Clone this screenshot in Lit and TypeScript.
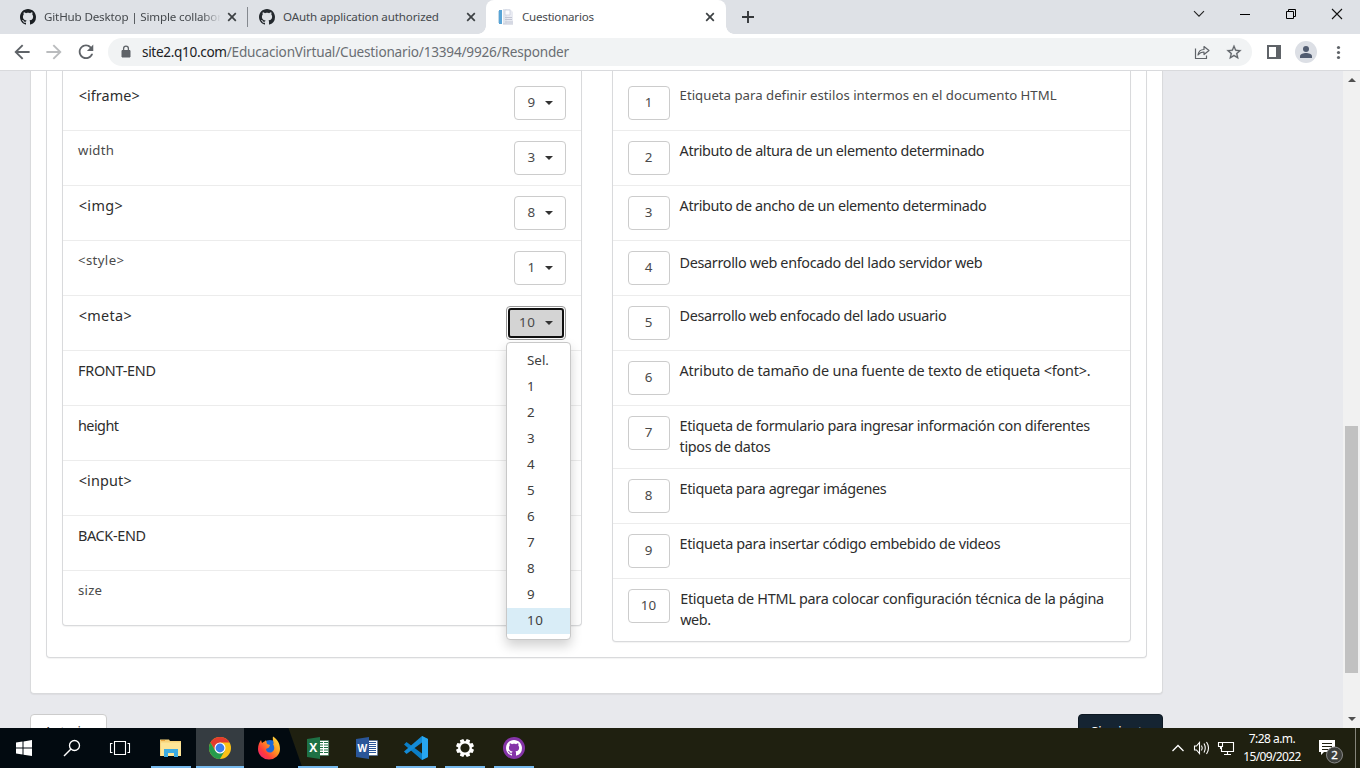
import { LitElement, html, css, svg, nothing } from "lit";
import { customElement, property } from "lit/decorators.js";
import { classMap } from "lit/directives/class-map.js";

const MARK =
  "M8 0C3.58 0 0 3.58 0 8c0 3.54 2.29 6.53 5.47 7.59.4.07.55-.17.55-.38 0-.19-.01-.82-.01-1.49-2.01.37-2.53-.49-2.69-.94-.09-.23-.48-.94-.82-1.13-.28-.15-.68-.52-.01-.53.63-.01 1.08.58 1.23.82.72 1.21 1.87.87 2.33.66.07-.52.28-.87.51-1.07-1.78-.2-3.64-.89-3.64-3.95 0-.87.31-1.59.82-2.15-.08-.2-.36-1.02.08-2.12 0 0 .67-.21 2.2.82.64-.18 1.32-.27 2-.27.68 0 1.36.09 2 .27 1.53-1.04 2.2-.82 2.2-.82.44 1.1.16 1.92.08 2.12.51.56.82 1.27.82 2.15 0 3.07-1.87 3.75-3.65 3.95.29.25.54.73.54 1.48 0 1.07-.01 1.93-.01 2.2 0 .21.15.46.55.38A8.013 8.013 0 0016 8c0-4.42-3.58-8-8-8z";

/** One line of text whose tracking is adjusted so it spans a given width. */
@customElement("fit-text")
class FitText extends LitElement {
  @property() text = "";
  @property({ type: Number }) width = 0;
  static styles = css`
    :host { display: block; white-space: pre; }
    .t { display: inline-block; }
  `;
  firstUpdated() {
    const el = this.renderRoot.querySelector<HTMLElement>(".t")!;
    const natural = el.getBoundingClientRect().width;
    const n = this.text.length;
    if (this.width && n > 1) el.style.letterSpacing = `${(this.width - natural) / (n - 1)}px`;
  }
  render() {
    return html`<span class="t">${this.text}</span>`;
  }
}

const cross = svg`<path d="M-3.8-3.8 3.8 3.8M3.8-3.8-3.8 3.8" stroke="#3c4043" stroke-width="1.7"/>`;

@customElement("browser-chrome")
class BrowserChrome extends LitElement {
  static styles = css`
    :host { display: block; font-family: "Noto Sans", "Open Sans", sans-serif; color: #45494d; }
    svg { display: block; flex: none; overflow: visible; }
    .strip { display: flex; height: 34px; background: #dee1e6; font-size: 11.6px; line-height: 34px; }
    .tab { display: flex; align-items: center; box-sizing: border-box; height: 34px; }
    .tab fit-text { flex: 1; min-width: 0; margin-left: 8px; height: 34px; }
    .t1 { width: 247px; padding: 0 9px 0 20px; }
    .t1 fit-text { margin-right: 4px; -webkit-mask-image: linear-gradient(to right, #000 158px, transparent 177px); }
    .t2 { width: 238px; padding: 0 9px 0 11px; }
    .sep { width: 1px; height: 20px; margin-top: 7px; background: #85898f; }
    .active { width: 240px; background: #fff; border-radius: 8px 8px 0 0; padding: 0 10px 0 12px; position: relative; }
    .active::before, .active::after { content: ""; position: absolute; bottom: 0; width: 8px; height: 8px; }
    .active::before { left: -8px; background: radial-gradient(circle at 0 0, transparent 7.5px, #fff 8px); }
    .active::after { right: -8px; background: radial-gradient(circle at 100% 0, transparent 7.5px, #fff 8px); }
    .plus { margin: 10px 0 0 15px; }
    .win { margin-left: auto; display: flex; gap: 26px; padding: 4px 13px 0 0; }
    .bar { display: flex; align-items: center; height: 36px; padding: 0 12px; box-sizing: border-box; background: #fff; border-bottom: 0; }
    .nav { display: flex; gap: 12px; margin-right: 12px; }
    .omni { display: flex; align-items: center; flex: 1; height: 28px; border-radius: 14px; background: #f1f3f4; padding: 0 8px 0 10px; font-size: 13.6px; line-height: 28px; color: #6a6e73; margin-right: 12px; }
    .url { display: flex; margin-left: 8px; flex: 1; }
    .host { color: #202124; }
    .acts { display: flex; gap: 12px; }
    .edge { height: 1px; background: #d9dadd; }
  `;
  private close() {
    return html`<svg width="12" height="12" viewBox="-6 -6 12 12">${cross}</svg>`;
  }
  render() {
    return html`
      <div class="strip">
        <div class="tab t1">
          <svg width="16" height="16" viewBox="0 0 16 16"><path fill="#1b1f23" d=${MARK} /></svg>
          <fit-text text="GitHub Desktop | Simple collabor" .width=${178}></fit-text>${this.close()}
        </div>
        <div class="sep"></div>
        <div class="tab t2">
          <svg width="16" height="16" viewBox="0 0 16 16"><path fill="#24292e" d=${MARK} /></svg>
          <fit-text text="OAuth application authorized" .width=${156}></fit-text>${this.close()}
        </div>
        <div class="tab active">
          <svg width="16" height="16" viewBox="0 0 16 16">
            <path d="M1 1h3v14H1z" fill="#58a4d6" /><path d="M0 2h1v12H0z" fill="#c3d9e8" />
            <path d="M5 0h7l3 3v12H5z" fill="#e9ebf2" /><path d="M5 0h4v15H5z" fill="#dfe4ec" />
            <path d="M7 1h5v5H7z" fill="#fafbfd" stroke="#ccd0df" stroke-width=".8" />
            <path d="M7 8.5h7M7 10.5h7M7 13h8M5 15h10" stroke="#c2c6d4" />
          </svg>
          <fit-text text="Cuestionarios" .width=${72}></fit-text>${this.close()}
        </div>
        <svg class="plus" width="14" height="14" viewBox="0 0 14 14"><path d="M7 1v12M1 7h12" stroke="#35383b" stroke-width="1.9" /></svg>
        <div class="win">
          <svg width="20" height="20" viewBox="-10 -10 20 20"><path d="M-5-2.8 0 2.2 5-2.8" fill="none" stroke="#222" stroke-width="1.1" /></svg>
          <svg width="20" height="20" viewBox="-10 -10 20 20"><path d="M-5 .5H5" stroke="#000" /></svg>
          <svg width="20" height="20" viewBox="-10 -10 20 20"><path d="M-4.5-2.5h7v7h-7zM-2.5-2.5v-2h7v7h-2" fill="none" stroke="#000" /></svg>
          <svg width="20" height="20" viewBox="-10 -10 20 20"><path d="M-5-5 5 5M5-5-5 5" stroke="#111" stroke-width="1.1" /></svg>
        </div>
      </div>
      <div class="bar">
        <div class="nav">
          <svg width="20" height="20" viewBox="1.5 1.5 21 21"><path fill="#5f6368" d="M20 11H7.83l5.59-5.59L12 4l-8 8 8 8 1.41-1.41L7.83 13H20z" /></svg>
          <svg width="20" height="20" viewBox="1.5 1.5 21 21"><path fill="#babcbe" d="M4 11h12.17l-5.59-5.59L12 4l8 8-8 8-1.41-1.41L16.17 13H4z" /></svg>
          <svg width="20" height="20" viewBox="1 1.2 22 22"><path fill="#5f6368" d="M17.65 6.35C16.2 4.9 14.21 4 12 4c-4.42 0-7.99 3.58-7.99 8s3.57 8 7.99 8c3.73 0 6.84-2.55 7.73-6h-2.08c-.82 2.33-3.04 4-5.65 4-3.31 0-6-2.69-6-6s2.69-6 6-6c1.66 0 3.14.69 4.22 1.78L13 11h7V4l-2.35 2.35z" /></svg>
        </div>
        <div class="omni">
          <svg width="16" height="16" viewBox="0 0 16 16"><path d="M4 6.5h8v6.5H4z" fill="#5f6368" stroke="#5f6368" stroke-linejoin="round" /><path d="M5.6 6.5V4.5a2.4 2.4 0 0 1 4.8 0v2" fill="none" stroke="#5f6368" stroke-width="1.3" /></svg>
          <div class="url">
            <fit-text class="host" text="site2.q10.com" .width=${85}></fit-text>
            <fit-text text="/EducacionVirtual/Cuestionario/13394/9926/Responder" .width=${342.5}></fit-text>
          </div>
          <div class="acts">
            <svg width="20" height="20" viewBox="-10 -10 20 20"><path d="M-6.5-3.5V6.500H4.500V3.500M-4 3C-3.500-1 -1-2.500 2-2.500V-5.500L7-1.500 2 2.500V0C-1 0-2.500 1-4 3z" fill="none" stroke="#5f6368" stroke-width="1.2" stroke-linejoin="round" /></svg>
            <svg width="20" height="20" viewBox="-1.5 -1.8 27 27"><path fill="#5f6368" stroke="#5f6368" stroke-width=".3" d="M22 9.24l-7.19-.62L12 2 9.19 8.63 2 9.24l5.46 4.73L5.82 21 12 17.27 18.18 21l-1.63-7.03L22 9.24zM12 15.4l-3.76 2.27 1-4.28-3.32-2.88 4.38-.38L12 6.1l1.71 4.04 4.38.38-3.32 2.88 1 4.28L12 15.4z" /></svg>
          </div>
        </div>
        <div class="acts">
          <svg width="20" height="20" viewBox="-10 -10 20 20"><path d="M-7-7H7V7H-7zM-5-5V5H2V-5z" fill="#5f6368" fill-rule="evenodd" /></svg>
          <svg width="20" height="20" viewBox="-10 -10 20 20"><circle r="11" fill="#dcdfe5" /><circle cy="-3" r="3" fill="#515c70" /><path d="M-6 6V4.500C-6 2-2.500 1.100 0 1.100S6 2 6 4.500V6z" fill="#515c70" /></svg>
          <svg width="20" height="20" viewBox="-10 -10 20 20"><g fill="#5f6368"><circle cx=".5" cy="-4.500" r="1.600" /><circle cx=".5" cy=".5" r="1.600" /><circle cx=".5" cy="5.500" r="1.600" /></g></svg>
        </div>
      </div>
      <div class="edge"></div>
    `;
  }
}

type Term = { text: string; w: number; light?: boolean; value?: number };
const TERMS: Term[] = [
  { text: "<iframe>", w: 61, value: 9 },
  { text: "width", w: 36, light: true, value: 3 },
  { text: "<img>", w: 44, value: 8 },
  { text: "<style>", w: 46, light: true, value: 1 },
  { text: "<meta>", w: 53, value: 10 },
  { text: "FRONT-END", w: 78 },
  { text: "height", w: 41 },
  { text: "<input>", w: 53 },
  { text: "BACK-END", w: 68 },
  { text: "size", w: 24, light: true },
];
type Def = { lines: [string, number][]; light?: boolean; low?: boolean };
const DEFS: Def[] = [
  { lines: [["Etiqueta para definir estilos intermos en el documento HTML", 377]], light: true },
  { lines: [["Atributo de altura de un elemento determinado", 305]] },
  { lines: [["Atributo de ancho de un elemento determinado", 307]] },
  { lines: [["Desarrollo web enfocado del lado servidor web", 303]], low: true },
  { lines: [["Desarrollo web enfocado del lado usuario", 267]] },
  { lines: [["Atributo de tamaño de una fuente de texto de etiqueta <font>.", 411]] },
  { lines: [["Etiqueta de formulario para ingresar información con diferentes", 410.5], ["tipos de datos", 91]] },
  { lines: [["Etiqueta para agregar imágenes", 207]] },
  { lines: [["Etiqueta para insertar código embebido de videos", 321]] },
  { lines: [["Etiqueta de HTML para colocar configuración técnica de la página", 424], ["web.", 31]] },
];
const OPTIONS = ["Sel.", "1", "2", "3", "4", "5", "6", "7", "8", "9", "10"];

@customElement("quiz-page")
class QuizPage extends LitElement {
  static styles = css`
    :host { display: flex; flex: 1; min-height: 0; overflow: hidden; background: #e8e9ed; font-family: "Noto Sans", sans-serif; color: #333; font-size: 14.4px; line-height: 21px; }
    .view { flex: 1; padding: 0 180px 0 30px; }
    .card, .inner, .panel { border: 1px solid #d9dadc; border-top: 0; border-radius: 0 0 4px 4px; box-sizing: border-box; background: #fff; box-shadow: 0 1px 1px rgba(0, 0, 0, 0.05); }
    .card { padding: 0 15px 35px; height: 623px; }
    .inner { height: 587px; padding: 0 15px; display: flex; justify-content: space-between; align-items: flex-start; }
    .panel { width: 520px; padding-top: 5px; }
    .panel.right { width: 519px; }
    .row { display: flex; box-sizing: border-box; min-height: 55px; padding: 10px 15px; border-bottom: 1px solid #ececec; }
    .row:last-child { border-bottom: 0; min-height: 54px; }
    .left .row { justify-content: space-between; }
    .text { color: #2d2d2d; position: relative; top: -1px; }
    .light { font-size: 13.2px; color: #4a4a4a; }
    .low { top: 1px; }
    .tag { margin-left: .7px; }
    .right .text { margin-left: 9.6px; }
    .right .row:last-child .text { margin-left: 10.2px; }
    .num { width: 42px; height: 34px; box-sizing: border-box; border: 1px solid #ccc; border-radius: 4px; text-align: center; font-size: 13.4px; line-height: 31px; padding-right: 1px; color: #4a4a4a; }
    .slot { position: relative; }
    .pick { display: flex; align-items: center; justify-content: space-between; width: 52px; height: 34px; box-sizing: border-box; border: 1px solid #ccc; border-radius: 4px; padding: 0 12px 0 12.5px; margin: 0; background: #fff; font: 13.4px/31px "Noto Sans", sans-serif; color: #4a4a4a; }
    .pick span { height: 32px; }
    .pick i { width: 0; height: 0; border: 4px solid transparent; border-top-color: #333; border-bottom: 0; }
    .open { width: 60px; border: 1px solid #999; padding: 1px; }
    .open .face { display: flex; align-items: center; justify-content: space-between; flex: 1; height: 30px; box-sizing: border-box; border: 2px solid #101010; border-radius: 3px; background: #d4d4d4; padding: 0 9px 0 9px; }
    .open span { line-height: 30px; letter-spacing: .6px; }
    .menu { position: absolute; z-index: 2; top: 36px; left: 0; width: 65px; box-sizing: border-box; padding: 5px 0; margin: 0; list-style: none; background: #fff; border: 1px solid #c8c8c8; border-radius: 4px; box-shadow: 0 6px 12px rgba(0, 0, 0, 0.18); }
    .menu li { height: 26px; line-height: 24px; padding-left: 20px; font-size: 13.4px; color: #404040; }
    .menu .on { background: #d9edf7; letter-spacing: .6px; }
    .foot { display: flex; justify-content: space-between; margin: 20px 0 0; width: 1133px; }
    .btn { box-sizing: border-box; height: 34px; border: 1px solid #ccc; border-radius: 4px; background: #fff; font-size: 13.2px; line-height: 32px; padding: 0 13px; }
    .prev { width: 77px; }
    .next { width: 85px; background: #152432; border-color: #0d1822; color: #fff; padding: 0 12px; }
    .scroll { width: 17px; background: #f1f1f1; display: flex; flex-direction: column; align-items: center; justify-content: space-between; box-sizing: border-box; padding: 7px 0; }
    .thumb { width: 13px; height: 247px; margin-top: 299px; background: #c1c1c1; }
    svg { display: block; }
  `;
  private select(t: Term) {
    if (t.value === undefined) return nothing;
    if (t.value !== 10) return html`<button class="pick"><span>${t.value}</span><i></i></button>`;
    return html`<div class="slot">
      <div class="pick open"><div class="face"><span>10</span><i></i></div></div>
      <ul class="menu">${OPTIONS.map((o) => html`<li class=${classMap({ on: o === "10" })}>${o}</li>`)}</ul>
    </div>`;
  }
  render() {
    return html`
      <div class="view">
        <div class="card"><div class="inner">
          <div class="panel left">
            ${TERMS.map((t) => html`<div class="row">
              <div class=${classMap({ text: true, light: !!t.light, tag: !t.light && t.text[0] === "<" })}><fit-text .text=${t.text} .width=${t.w}></fit-text></div>
              ${this.select(t)}
            </div>`)}
          </div>
          <div class="panel right">
            ${DEFS.map((d, i) => html`<div class="row">
              <div class="num">${i + 1}</div>
              <div class=${classMap({ text: true, light: !!d.light, low: !!d.low })}>
                ${d.lines.map(([s, w]) => html`<fit-text .text=${s} .width=${w}></fit-text>`)}
              </div>
            </div>`)}
          </div>
        </div></div>
        <div class="foot">
          <div class="btn prev"><fit-text text="Anterior" .width=${50}></fit-text></div>
          <div class="btn next"><fit-text text="Siguiente" .width=${59}></fit-text></div>
        </div>
      </div>
      <div class="scroll">
        <svg width="8" height="4" viewBox="0 0 8 4"><path d="M0 4 4 0l4 4z" fill="#505050" /></svg>
        <div class="thumb"></div>
        <svg width="8" height="4" viewBox="0 0 8 4"><path d="M0 0h8L4 4z" fill="#505050" /></svg>
      </div>
    `;
  }
}

const office = (dark: string, light: string, letter: string) => svg`
  <path d="M10.600-7.500V7.500H-1V-7.500z" fill="#fff" stroke=${light} stroke-width=".5"/>
  ${letter === "X"
    ? svg`<path d="M2-5.500h3M6-5.500h4M2-3h3M6-3h4M2-.5h3M6-.5h4M2 2h3M6 2h4M2 4.500h3M6 4.500h4" stroke=${light} stroke-width="1.100"/>`
    : svg`<path d="M2-5.500h7M2-3.500h7M2-1.500h7M2 .5h7M2 2.500h7M2 4.500h7" stroke=${light}/>`}
  <path d="M-11-9 2-11V11L-11 9z" fill=${dark}/>
  <text x="-4.700" y="4" text-anchor="middle" font-family="Open Sans, sans-serif" font-weight="700" font-size=${letter === "X" ? 12 : 10} fill="#fff">${letter}</text>`;

const ICONS = [
  { art: svg`<path d="M-8-5.500-1.500-6.400V-.5H-8zM-.5-6.600 8-8V-.5H-.5zM-8 .5H-1.500V6.400L-8 5.500zM-.5 .5H8V8L-.5 6.700z" fill="#fff"/>` },
  { art: svg`<circle cx="2.500" cy="-2.500" r="5" fill="none" stroke="#fff" stroke-width="1.300"/><path d="M-1 1-8 8" stroke="#fff" stroke-width="1.500"/>` },
  { art: svg`<path d="M-5.500-6.500h11v13h-11zM-7.500-4.500h-2v9h2M7.500-4.500h2v9h-2" fill="none" stroke="#fff" stroke-width="1.100"/>` },
  { art: svg`<path d="M-11-8.500H-2L-1-7H10V8H-11z" fill="#f7d379"/><path d="M-10-7.500h4" stroke="#e8a33d"/><path d="M-10-5.500H10V8H-10z" fill="#fde597"/><path d="M-7 9V1H7V9H3V5H-3V9z" fill="#3cabe2"/>`, line: "mid" },
  { art: svg`<circle r="11" fill="#fbc116"/><path d="M-9.530-5.500A11 11 0 0 1 9.530-5.500H0L-4.760 2.750z" fill="#e33b2e"/><path d="M-9.530-5.500A11 11 0 0 0 0 11L4.760 2.750 0 5.500-4.760 2.750z" fill="#269b4c"/><circle r="5.500" fill="#fff"/><circle r="4.400" fill="#3b7ded"/>`, line: "full", on: true },
  { art: svg`<defs><linearGradient id="ff" x1="1" y1="0" x2="0" y2="1"><stop offset="0" stop-color="#ffe84a"/><stop offset=".4" stop-color="#ff9a1f"/><stop offset=".7" stop-color="#ff3d3a"/><stop offset="1" stop-color="#e8178a"/></linearGradient></defs><circle cx="1" cy="0" r="8" fill="#1b69d8"/><path d="M4-11.500C8-9 11-5 11 1A11 10.500 0 0 1-11 1C-11-3-9.500-6-8-8L-7-5C-5-6.500-4-6.500-3-8L-2-4 1-3 0-.5-3 1C-3 3.500-1 5 2 4.500 5 3.500 6.500 0 4-4 6-4 3-8 4-11.500z" fill="url(#ff)"/>` },
  { art: office("#1e7145", "#1e7145", "X"), line: "mid" },
  { art: office("#2a5699", "#2a5699", "W") },
  { art: svg`<path d="M6-12 12-9V9L6 12-12-3.500-9.500-6 6 5.500z" fill="#0b7ec6"/><path d="M6-12-12 3.500-9.500 6 6-5.500z" fill="#148bd6"/><path d="M6-12 12-9V9L6 12z" fill="#27a6f0"/>`, line: "mid" },
  { art: svg`<g fill="#fff">${[0, 45, 90, 135, 180, 225, 270, 315].map((a) => svg`<path d="M-1.800-9H1.800L2.400-5H-2.400z" transform="rotate(${a + 22.5})"/>`)}</g><circle r="5.700" fill="none" stroke="#fff" stroke-width="2.200"/>`, line: "mid" },
  { art: svg`<circle r="11" fill="#8534a8"/><path d=${MARK} transform="translate(-8 -8)" fill="#fff"/>`, line: "mid" },
];

@customElement("task-bar")
class TaskBar extends LitElement {
  static styles = css`
    :host { display: flex; height: 40px; box-sizing: border-box; background: linear-gradient(70.7deg, #020a10 0, #020a10 285px, #1f2010 286px); font-family: "Noto Sans", sans-serif; color: #fff; }
    svg { display: block; overflow: visible; flex: none; }
    .apps { display: flex; gap: 1px; }
    .sys { display: flex; margin-right: 3px; }
    .app { width: 48px; height: 40px; display: flex; flex-direction: column; align-items: center; justify-content: space-between; }
    .on { background: #353c41; }
    .line { height: 2px; width: 40px; background: #76b9ed; }
    .full { width: 48px; }
    .tray { margin-left: auto; display: flex; align-items: center; }
    .ico { display: flex; gap: 4px; margin-right: 1px; }
    .clock { width: 62px; margin-left: 4px; display: flex; flex-direction: column; align-items: center; font-size: 12px; line-height: 18px; height: 36px; }
    .note { margin-left: 16px; }
    .desk { width: 4px; height: 40px; margin-left: 20px; border-left: 1px solid #85857b; }
  `;
  render() {
    const cell = (i: any) => html`<div class=${classMap({ app: true, on: !!i.on })}>
      <svg width="24" height="38" viewBox="-12 -20 24 38">${i.art}</svg>
      ${i.line ? html`<div class=${classMap({ line: true, full: i.line === "full" })}></div>` : nothing}
    </div>`;
    return html`
      <div class="sys">${ICONS.slice(0, 3).map(cell)}</div>
      <div class="apps">${ICONS.slice(3).map(cell)}</div>
      <div class="tray">
        <div class="ico">
          <svg width="20" height="20" viewBox="-10 -10 20 20"><path d="M-5.500 3 0-2.500 5.500 3" fill="none" stroke="#fff" stroke-width="1.300" /></svg>
          <svg width="20" height="20" viewBox="-10 -10 20 20"><path d="M-7.500-2H-5.500L-2.500-5.500V5.500L-5.500 2H-7.500zM-.5-2.500Q1 0-.5 2.500M2-4.500Q4.500 0 2 4.500M4.500-6Q8.500 0 4.500 6" fill="none" stroke="#fff" stroke-width="1.100" /></svg>
          <svg width="20" height="20" viewBox="-10 -10 20 20"><path d="M-3-5.500H7.500V3.500H-4.500V-1M1.500 3.500V6.500M-2 6.500H5M-7.500-5.500h4v4h-4zM-5.500-1.500V1" fill="none" stroke="#fff" stroke-width="1.100" /></svg>
        </div>
        <div class="clock">
          <fit-text text="7:28 a.m." .width=${47}></fit-text>
          <fit-text text="15/09/2022" .width=${58}></fit-text>
        </div>
        <svg class="note" width="16" height="20" viewBox="0 0 16 20">
          <path d="M0 2H16V14H5L2 17V14H0z" fill="#fff" /><path d="M3 5.500H13M3 8.500H13M3 11.500H9" stroke="#1f2010" />
          <circle cx="15.500" cy="17" r="8" fill="#3d3f3b" stroke="#888" stroke-width="1" />
          <text x="15.500" y="21.200" text-anchor="middle" font-size="11.500" fill="#fff" stroke="#fff" stroke-width=".3">2</text>
        </svg>
        <div class="desk"></div>
      </div>
    `;
  }
}

@customElement("app-root")
class AppRoot extends LitElement {
  static styles = css`
    :host { display: flex; flex-direction: column; width: 1360px; height: 768px; overflow: hidden; background: #fff; }
  `;
  render() {
    return html`<browser-chrome></browser-chrome><quiz-page></quiz-page><task-bar></task-bar>`;
  }
}
